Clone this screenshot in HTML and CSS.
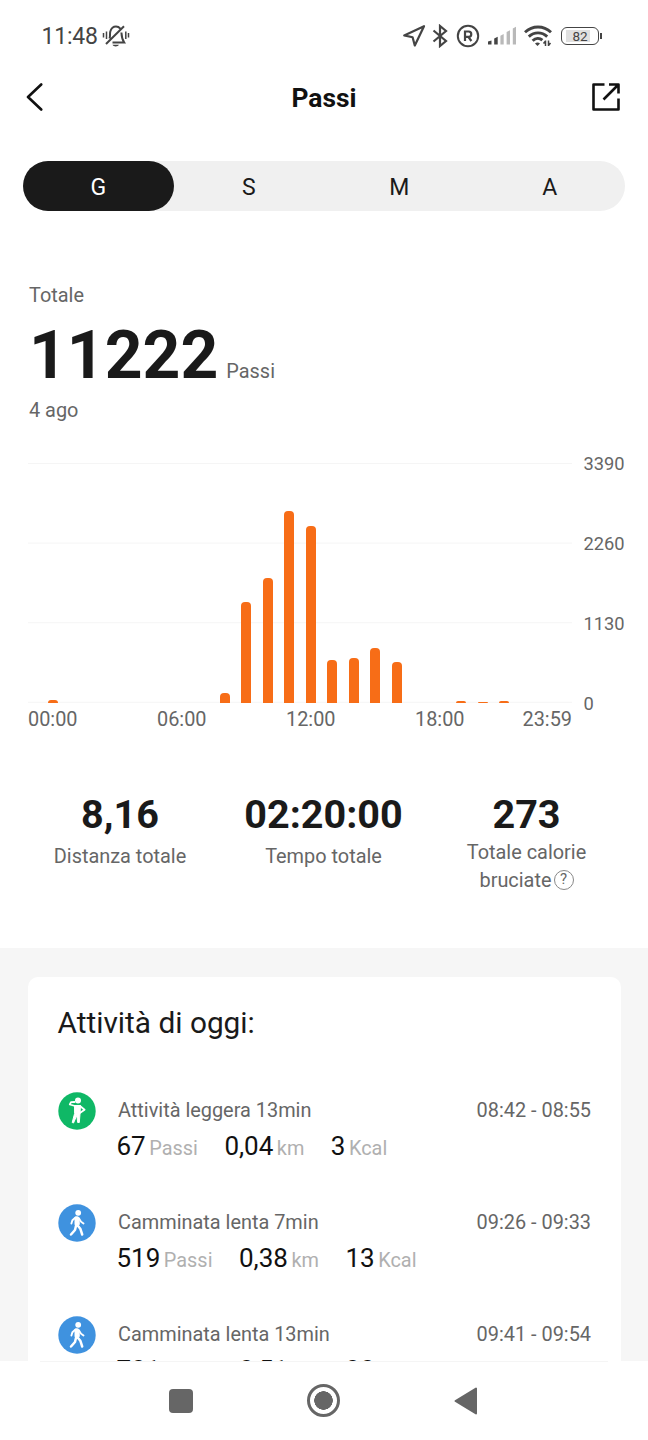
FILE: index.html
```
<!DOCTYPE html>
<html lang="it">
<head>
    <meta charset="UTF-8">
    <meta name="viewport" content="width=device-width, initial-scale=1.0">
    <title>Passi</title>
    <link rel="stylesheet" href="styles.css">
</head>
<body>
    <div class="screen">
        <div class="status-bar">
            <span class="clock">11:48</span>
            <svg class="mute" width="28" height="24" viewBox="0 0 28 24" fill="none" stroke="#444" stroke-width="2">
                <path d="M7.500 14.500C8.500 12 7.600 10 8.300 7.500C9.300 4.200 11.500 2.600 14 2.600C15.800 2.600 17.300 3.400 18.300 4.600M19.400 8.500C19.600 12 19.800 15 22.200 18.600H10.500M4 20L22 2.200"/>
                <path d="M10.500 20.800h6.400c-.8 2.200-5.600 2.200-6.400 0z" fill="#444" stroke="none"/>
                <path d="M1.500 9v4.500M4.500 7.500v7.500M23.800 7.500v7.500M26.500 9v4.500" stroke-width="1.500"/>
            </svg>
            <div class="status-icons">
                <svg width="24" height="24" viewBox="0 0 24 24" fill="none" stroke="#444" stroke-width="2.200" stroke-linejoin="round">
                    <path d="M22 2.200L2.200 11.400L10.600 13.300L12.800 21.500Z"/>
                </svg>
                <svg class="bt" width="16" height="24" viewBox="0 0 16 24" fill="none" stroke="#444" stroke-width="2.200">
                    <path d="M1.500 6.500L14 17L8 22V2L14 7L1.500 17.500"/>
                </svg>
                <svg class="reg" width="24" height="24" viewBox="0 0 24 24" fill="none" stroke="#444" stroke-width="2">
                    <circle cx="12" cy="12" r="10.200"/>
                    <path d="M9 17V7.500h3.600a2.600 2.600 0 0 1 0 5.300H9M12.300 12.800L15.400 17" stroke-width="2.200"/>
                </svg>
                <svg class="signal" width="28" height="20" viewBox="0 0 28 20">
                    <path d="M0 15.500L3.500 14.500V18.500H0zM6.200 12.500L9.700 10.800V18.500H6.200z" fill="#444"/>
                    <path d="M12.400 9.800L15.700 8V18.500H12.400zM18.600 6L22 4.200V18.500H18.600zM24.800 2.600L28 .8V18.500H24.800z" fill="#b9b9b9"/>
                </svg>
                <svg class="wifi" width="28" height="22" viewBox="0 0 28 22" fill="none" stroke="#444" stroke-width="2.900">
                    <path d="M1 7.300C8.500 .3 19.500 .3 27 7.300M4.800 11.600C10.200 6.600 17.800 6.600 23.200 11.600M8.600 15.800C11.800 12.700 15.600 12.700 18.400 15.200"/>
                    <path d="M11 18.500Q13.500 16.500 16 18.500L13.500 21z" fill="#444" stroke="none"/>
                    <path d="M21.500 15.500v5.500M19.500 18.500l2-2.500M24.500 15.500V21M24.500 20.500l2-2.500" stroke-width="1.500"/>
                </svg>
                <div class="battery"><span>82</span></div>
                <i class="battery-tip"></i>
            </div>
        </div>

        <div class="header">
            <svg width="18" height="28" viewBox="0 0 18 28" fill="none" stroke="#111" stroke-width="2.600" stroke-linecap="round" stroke-linejoin="round">
                <path d="M15.200 1.500L2 14L15.200 26.500"/>
            </svg>
            <h1>Passi</h1>
            <svg width="28" height="28" viewBox="0 0 28 28" fill="none" stroke="#111" stroke-width="2.600" stroke-linejoin="round">
                <path d="M12.500 1.500H1.500V26.500H26.500V15.500M17 1.500H26.500V10.500M26.500 1.500L11.500 16.500"/>
            </svg>
        </div>

        <div class="tabs">
            <div class="tab active">G</div>
            <div class="tab">S</div>
            <div class="tab">M</div>
            <div class="tab">A</div>
        </div>

        <div class="total">
            <p>Totale</p>
            <div class="total-value"><strong>11222</strong><span>Passi</span></div>
            <p>4 ago</p>
        </div>

        <div class="chart">
            <div class="plot">
                <div class="bars">
                    <div class="bar" style="height: 3px"></div>
                    <div class="bar"></div>
                    <div class="bar"></div>
                    <div class="bar"></div>
                    <div class="bar"></div>
                    <div class="bar"></div>
                    <div class="bar"></div>
                    <div class="bar"></div>
                    <div class="bar" style="height: 10px"></div>
                    <div class="bar" style="height: 101px"></div>
                    <div class="bar" style="height: 125px"></div>
                    <div class="bar" style="height: 192px"></div>
                    <div class="bar" style="height: 177px"></div>
                    <div class="bar" style="height: 43px"></div>
                    <div class="bar" style="height: 45px"></div>
                    <div class="bar" style="height: 55px"></div>
                    <div class="bar" style="height: 41px"></div>
                    <div class="bar"></div>
                    <div class="bar"></div>
                    <div class="bar" style="height: 2px"></div>
                    <div class="bar" style="height: 1.5px"></div>
                    <div class="bar" style="height: 2.5px"></div>
                    <div class="bar"></div>
                    <div class="bar"></div>
                </div>
                <div class="hours">
                    <span class="h0">00:00</span>
                    <span class="h6">06:00</span>
                    <span class="h12">12:00</span>
                    <span class="h18">18:00</span>
                    <span class="h23">23:59</span>
                </div>
            </div>
            <div class="scale">
                <span>3390</span>
                <span>2260</span>
                <span>1130</span>
                <span>0</span>
            </div>
        </div>

        <div class="stats">
            <div class="stat">
                <strong>8,16</strong>
                <p>Distanza totale</p>
            </div>
            <div class="stat">
                <strong>02:20:00</strong>
                <p>Tempo totale</p>
            </div>
            <div class="stat double">
                <strong>273</strong>
                <p>Totale calorie<br>bruciate<span class="help">?</span></p>
            </div>
        </div>

        <div class="activities">
            <div class="card">
                <h2>Attività di oggi:</h2>

                <div class="activity">
                    <svg width="38" height="38" viewBox="0 0 38 38">
                        <circle cx="19" cy="19" r="18.700" fill="#0fb866"/>
                        <circle cx="20" cy="8.600" r="3" fill="#fff"/>
                        <path d="M16.500 13.500H22.500L22 22L21.300 30.500H19.700L18.800 23.500L15.500 31L14.200 30.500L16.600 21.500Z" fill="#fff" stroke="#fff" stroke-linejoin="round"/>
                        <path d="M17 14L11.800 12.500L13 10.200L16.500 10M22 14L26.600 17.800L22.200 20.700" fill="none" stroke="#fff" stroke-width="1.800" stroke-linecap="round" stroke-linejoin="round"/>
                    </svg>
                    <div class="info">
                        <div class="name"><span>Attività leggera 13min</span><span>08:42 - 08:55</span></div>
                        <div class="values">
                            <span><b>67</b>Passi</span>
                            <span><b>0,04</b>km</span>
                            <span><b>3</b>Kcal</span>
                        </div>
                    </div>
                </div>

                <div class="activity">
                    <svg width="38" height="38" viewBox="0 0 38 38">
                        <circle cx="19" cy="19" r="18.700" fill="#3f92df"/>
                        <circle cx="20.200" cy="8.800" r="2.900" fill="#fff"/>
                        <path d="M17 13.200Q19 12 21 13.500L21.300 20.500L17 20.800Z" fill="#fff" stroke="#fff"/>
                        <path d="M17.500 13.500L14.400 16.200L13.400 19.500M21 14.500L23 17.700L25.500 19.500" fill="none" stroke="#fff" stroke-width="1.900" stroke-linecap="round"/>
                        <path d="M18.500 20L22.300 24.700L24.200 30.500M18.200 21L17 26L13 30.500" fill="none" stroke="#fff" stroke-width="2.500" stroke-linecap="round" stroke-linejoin="round"/>
                    </svg>
                    <div class="info">
                        <div class="name"><span>Camminata lenta 7min</span><span>09:26 - 09:33</span></div>
                        <div class="values">
                            <span><b>519</b>Passi</span>
                            <span><b>0,38</b>km</span>
                            <span><b>13</b>Kcal</span>
                        </div>
                    </div>
                </div>

                <div class="activity">
                    <svg width="38" height="38" viewBox="0 0 38 38">
                        <circle cx="19" cy="19" r="18.700" fill="#3f92df"/>
                        <circle cx="20.200" cy="8.800" r="2.900" fill="#fff"/>
                        <path d="M17 13.200Q19 12 21 13.500L21.300 20.500L17 20.800Z" fill="#fff" stroke="#fff"/>
                        <path d="M17.500 13.500L14.400 16.200L13.400 19.500M21 14.500L23 17.700L25.500 19.500" fill="none" stroke="#fff" stroke-width="1.900" stroke-linecap="round"/>
                        <path d="M18.500 20L22.300 24.700L24.200 30.500M18.200 21L17 26L13 30.500" fill="none" stroke="#fff" stroke-width="2.500" stroke-linecap="round" stroke-linejoin="round"/>
                    </svg>
                    <div class="info">
                        <div class="name"><span>Camminata lenta 13min</span><span>09:41 - 09:54</span></div>
                        <div class="values">
                            <span><b>701</b>Passi</span>
                            <span><b>0,51</b>km</span>
                            <span><b>20</b>Kcal</span>
                        </div>
                    </div>
                </div>
            </div>
        </div>

        <div class="nav-bar">
            <i class="nav-recent"></i>
            <i class="nav-home"></i>
            <svg width="24" height="28" viewBox="0 0 24 28">
                <path d="M22 1.500V26.500L1.500 14Z" fill="#666" stroke="#666" stroke-width="2" stroke-linejoin="round"/>
            </svg>
        </div>
    </div>
</body>
</html>
```
FILE: styles.css
```
* {
    box-sizing: border-box;
}
body {
    margin: 0;
    font-family: Roboto, sans-serif;
    font-size: 19.9px;
    color: #666;
    background: white;
}
h1, h2, p {
    margin: 0;
}
.screen {
    width: 648px;
    height: 1440px;
    display: flex;
    flex-direction: column;
    overflow: hidden;
}

/* status bar */
.status-bar {
    height: 72px;
    padding: 0 46px 0 41.5px;
    display: flex;
    align-items: center;
    color: #444;
}
.clock {
    font-size: 23px;
    letter-spacing: -0.2px;
}
.mute {
    margin-left: 4px;
}
.status-icons {
    margin-left: auto;
    display: flex;
    align-items: center;
}
.bt {
    margin-left: 6px;
}
.reg {
    margin-left: 8px;
}
.signal {
    margin-left: 8px;
}
.wifi {
    margin-left: 8px;
}
.battery {
    width: 38px;
    height: 18px;
    margin-left: 9px;
    border: 1.8px solid #444;
    border-radius: 6px;
    background: linear-gradient(#e0e0e0, #e0e0e0) 4px center / 24px 12px no-repeat;
    font-size: 13.5px;
    line-height: 17px;
    text-align: center;
}
.battery-tip {
    width: 2px;
    height: 6px;
    margin-left: 1px;
    background: #444;
}

/* title */
.header {
    height: 49px;
    padding: 0 28px 0 26px;
    display: flex;
    align-items: center;
    justify-content: space-between;
}
.header h1 {
    padding: 2px 0 0 12px;
    font-size: 26.4px;
    color: #111;
}

.tabs {
    flex: none;
    height: 50px;
    margin: 40px 23px 0;
    display: flex;
    border-radius: 25px;
    background: #f0f0f0;
}
.tab {
    flex: 1;
    border-radius: 25px;
    font-size: 23px;
    line-height: 53px;
    text-align: center;
    color: #1a1a1a;
}
.tab.active {
    background: #1a1a1a;
    color: white;
}

.total {
    margin: 72px 29px 0;
}
.total p {
    line-height: 26px;
}
.total-value {
    height: 89px;
    display: flex;
    align-items: baseline;
    line-height: 93px;
}
.total-value strong {
    font-size: 66px;
    color: #1a1a1a;
}
.total-value span {
    margin-left: 8px;
}

/* chart */
.chart {
    height: 269px;
    margin: 39px 0 0 28px;
    display: flex;
}
.plot {
    width: 544px;
}
.bars {
    height: 240px;
    padding: 0 14px;
    display: grid;
    grid-template-columns: repeat(24, minmax(0, 1fr));
    align-items: end;
    justify-items: center;
    background: linear-gradient(#f5f5f5 1px, transparent 1px) 0 0 / 100% 79.6px;
}
.bar {
    width: 10px;
    border-radius: 4px 4px 0 0;
    background: #f76d17;
}
.hours {
    padding: 0 14px;
    display: grid;
    grid-template-columns: repeat(24, minmax(0, 1fr));
    justify-items: center;
    line-height: 34px;
}
.h0 { grid-column: 1; }
.h6 { grid-column: 7; }
.h12 { grid-column: 13; }
.h18 { grid-column: 19; }
.h23 { grid-column: 24; }
.scale {
    height: 264px;
    margin: -11px 0 0 11.5px;
    display: flex;
    flex-direction: column;
    justify-content: space-between;
    font-size: 18.3px;
    line-height: 24.4px;
}

.stats {
    height: 156px;
    margin: 60px 19px 0;
    display: grid;
    grid-template-columns: 202px 205px 201px;
    text-align: center;
}
.stat strong {
    display: block;
    font-size: 39.6px;
    line-height: 45px;
    color: #1a1a1a;
}
.stat p {
    margin-top: 6px;
    line-height: 28px;
}
.stat.double p {
    margin-top: 2px;
}
.help {
    display: inline-block;
    width: 20px;
    height: 20px;
    margin-left: 2px;
    border: 1.8px solid #888;
    border-radius: 50%;
    font-size: 15px;
    line-height: 17px;
    vertical-align: 3px;
}

/* activity list */
.activities {
    flex: 1;
    min-height: 0;
    padding: 29px 27px 0 28px;
    background: #f6f6f6;
    overflow: hidden;
}
.card {
    height: 500px;
    padding: 28px 30px 0 29.5px;
    border-radius: 10px;
    background: white;
}
.card h2 {
    height: 87px;
    font-size: 29.8px;
    font-weight: 400;
    line-height: 36px;
    color: #1a1a1a;
}
.activity {
    height: 112px;
    display: flex;
}
.info {
    flex: 1;
    margin: 6px 0 0 22.5px;
}
.name {
    display: flex;
    justify-content: space-between;
    line-height: 26px;
}
.values {
    margin: 4px 0 0 -1.5px;
    display: flex;
    gap: 26.5px;
    line-height: 36px;
    color: #b0b0b0;
}
.values b {
    margin-right: 3.5px;
    font-size: 26px;
    font-weight: 400;
    color: #111;
}

/* android buttons */
.nav-bar {
    flex: none;
    height: 79px;
    padding: 0 170px 0 169px;
    display: flex;
    align-items: center;
    justify-content: space-between;
    background: linear-gradient(#f5f5f5, #f5f5f5) center top / 568px 1px no-repeat white;
}
.nav-recent {
    width: 24px;
    height: 24px;
    border-radius: 4px;
    background: #666;
}
.nav-home {
    width: 33px;
    height: 33px;
    border: 3px solid #666;
    border-radius: 50%;
    background: radial-gradient(#666 9px, transparent 9.5px);
}
```
